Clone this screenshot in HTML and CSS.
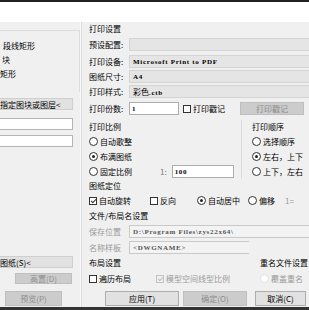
FILE: index.html
```html
<!DOCTYPE html>
<html lang="zh-CN">
<head>
  <meta charset="UTF-8">
  <title>打印设置</title>
  <link rel="stylesheet" href="styles.css">
</head>
<body>
  <div class="topbar"></div>
  <div class="band"></div>
  <div class="dialog">
    <div class="left">
      <div class="lgroup">
        <div class="litem cut1">段线矩形</div>
        <div class="litem cut2">块</div>
        <div class="litem cut3">矩形</div>
      </div>
      <div class="pickbtn">指定图块或图层&lt;</div>
      <div class="linput"></div>
      <div class="linput"></div>
      <div class="lspacer"></div>
      <div class="pickbtn paper">图纸(S)&lt;</div>
      <div class="lbtnrow"><div class="btn disabled wide">高置(D)</div></div>
      <div class="lbtnrow prow"><div class="btn disabled preview">预览(P)</div></div>
    </div>
    <div class="right">
      <div class="head top">打印设置</div>
      <div class="frow r1"><span class="lab">预设配置:</span><div class="combo"></div></div>
      <div class="frow r2"><span class="lab">打印设备:</span><div class="combo mono">Microsoft Print to PDF</div></div>
      <div class="frow"><span class="lab">图纸尺寸:</span><div class="combo mono">A4</div></div>
      <div class="frow"><span class="lab">打印样式:</span><div class="combo">彩色<span class="mono">.ctb</span></div></div>
      <div class="frow r5">
        <span class="lab">打印份数:</span>
        <div class="input small mono">1</div>
        <span class="check"><i class="box"></i>打印戳记</span>
        <div class="btn disabled stamp">打印戳记</div>
      </div>
      <div class="split first">
        <div class="scale">
          <div class="head sub">打印比例</div>
          <div class="opt"><i class="radio"></i>自动歌整</div>
          <div class="opt"><i class="radio on"></i>布满图纸</div>
          <div class="opt"><i class="radio"></i>固定比例<span class="ratio">1:</span><div class="input ratioin mono">100</div></div>
        </div>
        <div class="order">
          <div class="head sub">打印顺序</div>
          <div class="opt"><i class="radio"></i>选择顺序</div>
          <div class="opt"><i class="radio on"></i>左右，上下</div>
          <div class="opt"><i class="radio"></i>上下，左右</div>
        </div>
      </div>
      <div class="head sub">图纸定位</div>
      <div class="opt posrow">
        <span class="check"><i class="box on"></i>自动旋转</span>
        <span class="check rev"><i class="box"></i>反向</span>
        <span class="check center"><i class="radio on"></i>自动居中</span>
        <span class="check shift"><i class="radio"></i>偏移</span>
        <span class="gray offs">1=</span>
      </div>
      <div class="head sub gap">文件/布局名设置</div>
      <div class="frow gap"><span class="lab gray">保存位置</span><div class="combo flat mono">D:\Program Files\zys22x64\</div></div>
      <div class="frow gap"><span class="lab gray">名称样板</span><div class="combo flat short mono">&lt;DWGNAME&gt;</div></div>
      <div class="split last">
        <div class="scale">
          <div class="head sub">布局设置</div>
          <div class="opt">
            <span class="check"><i class="box"></i>遍历布局</span>
            <span class="check gray model"><i class="box on dim"></i>模型空间线型比例</span>
          </div>
        </div>
        <div class="order">
          <div class="head sub">重名文件设置</div>
          <div class="opt gray"><i class="radio dim"></i>覆盖重名</div>
        </div>
      </div>
      <div class="btnrow">
        <div class="btn apply">应用(T)</div>
        <div class="btn disabled ok">确定(O)</div>
        <div class="btn cancel">取消(C)</div>
      </div>
    </div>
  </div>
  <div class="bottombar"></div>
</body>
</html>
```

FILE: styles.css
```css
html, body {
  margin: 0;
  padding: 0;
}
body {
  width: 309px;
  height: 310px;
  overflow: hidden;
  background: #f0f0f0;
  font-family: "Noto Sans CJK SC", sans-serif;
  font-size: 8px;
  color: #000;
}
.topbar {
  height: 2px;
  background: #222;
}
.band {
  height: 20px;
  background: #fff;
}
.bottombar {
  height: 3px;
  background: #333;
}
.dialog {
  display: flex;
  height: 285px;
}
.mono {
  font-family: "Liberation Serif", serif;
  font-weight: bold;
  font-size: 7px;
  letter-spacing: 0.7px;
}
.gray {
  color: #9a9a9a;
}

/* left column */
.left {
  flex: none;
  width: 80px;
  display: flex;
  flex-direction: column;
  border-right: 1px solid #fafafa;
}
.lgroup {
  margin-top: 8px;
  height: 62px;
  border-top: 1px solid #dcdcdc;
  border-right: 1px solid #dcdcdc;
  padding-top: 8px;
  box-sizing: border-box;
}
.litem {
  height: 14px;
  line-height: 14px;
  white-space: nowrap;
}
.cut1 { padding-left: 3px; }
.cut2 { padding-left: 2px; }
.cut3 { padding-left: 0; }
.pickbtn {
  margin-top: 6px;
  width: 73px;
  height: 12px;
  line-height: 11px;
  background: #e1e1e1;
  border: 1px solid #cfcfcf;
  border-left: none;
  box-sizing: border-box;
  white-space: nowrap;
}
.pickbtn.paper {
  margin-top: 0;
}
.linput {
  margin-top: 8px;
  width: 73px;
  height: 12px;
  background: #fff;
  border: 1px solid #b5b5b5;
  border-left: none;
  box-sizing: border-box;
}
.linput + .linput {
  margin-top: 5px;
}
.lspacer {
  flex: 1;
}
.lbtnrow {
  display: flex;
  margin-top: 5px;
}
.lbtnrow.prow {
  margin-top: 7px;
}
.btn {
  height: 15px;
  line-height: 13px;
  text-align: center;
  background: #e1e1e1;
  border: 1px solid #adadad;
  box-sizing: border-box;
  white-space: nowrap;
}
.btn.disabled {
  background: #cccccc;
  border-color: #bfbfbf;
  color: #8c8c8c;
}
.wide {
  margin-left: 15px;
  width: 57px;
  height: 11px;
  line-height: 9px;
}
.preview {
  margin-left: 5px;
  width: 57px;
  margin-bottom: 1px;
}

/* right column */
.right {
  flex: 1;
  min-width: 0;
  padding-left: 7px;
  display: flex;
  flex-direction: column;
  border-left: 1px solid #dcdcdc;
}
.head {
  height: 14px;
  line-height: 14px;
  white-space: nowrap;
}
.head.top {
  height: 13px;
  line-height: 13px;
}
.frow {
  display: flex;
  align-items: center;
  height: 15px;
  white-space: nowrap;
}
.r1, .r2, .r5 {
  margin-top: 2px;
}
.gap {
  margin-top: 1px;
}
.lab {
  width: 40px;
  flex: none;
}
.combo {
  flex: 1;
  height: 13px;
  line-height: 12px;
  background: #e5e5e5;
  border: 1px solid #d4d4d4;
  border-right: none;
  box-sizing: border-box;
  padding-left: 3px;
  overflow: hidden;
}
.combo.flat {
  background: #f3f3f3;
  border-color: #c9c9c9;
  color: #555;
}
.combo.short {
  flex: none;
  width: 120px;
}
.input {
  flex: none;
  height: 13px;
  line-height: 12px;
  background: #fff;
  border: 1px solid #adadad;
  box-sizing: border-box;
  padding-left: 2px;
}
.small {
  width: 50px;
}
.check {
  display: inline-flex;
  align-items: center;
}
.frow .check {
  margin-left: 4px;
}
.box {
  flex: none;
  width: 8px;
  height: 8px;
  border: 1px solid #333;
  box-sizing: border-box;
  margin-right: 2px;
  background: #fff;
  position: relative;
}
.box.on::after {
  content: "";
  position: absolute;
  left: 2px;
  top: 0;
  width: 2px;
  height: 4px;
  border: solid #333;
  border-width: 0 1px 1px 0;
  transform: rotate(45deg);
}
.box.dim {
  border-color: #c4c4c4;
  background: transparent;
}
.box.dim::after {
  border-color: #bdbdbd;
}
.radio {
  flex: none;
  width: 9px;
  height: 9px;
  border: 1px solid #333;
  border-radius: 50%;
  box-sizing: border-box;
  margin-right: 2px;
  background: #fff;
  display: inline-block;
  position: relative;
}
.radio.on::after {
  content: "";
  position: absolute;
  left: 2px;
  top: 2px;
  width: 3px;
  height: 3px;
  border-radius: 50%;
  background: #222;
}
.radio.dim {
  border-color: #e0e0e0;
}
.stamp {
  flex: none;
  margin-left: auto;
  margin-right: 5px;
  width: 64px;
  height: 13px;
  line-height: 11px;
}
.split {
  display: flex;
}
.split.first {
  margin-top: 4px;
}
.split.last {
  margin-top: 1px;
}
.split.last .opt {
  margin-top: 1px;
}
.scale {
  flex: none;
  width: 152px;
  border-right: 1px solid #dcdcdc;
}
.order {
  flex: 1;
  padding-left: 10px;
}
.last .scale {
  border-right: none;
}
.last .order {
  padding-left: 19px;
}
.opt {
  display: flex;
  align-items: center;
  height: 15px;
  white-space: nowrap;
}
.ratio {
  margin-left: 28px;
  margin-right: 5px;
  color: #777;
}
.ratioin {
  width: 62px;
}
.rev {
  margin-left: 19px;
}
.center {
  margin-left: 21px;
}
.shift {
  margin-left: 8px;
}
.offs {
  margin-left: 10px;
}
.model {
  margin-left: 25px;
}
.btnrow {
  display: flex;
  margin-top: 5px;
  margin-left: 16px;
}
.apply {
  width: 74px;
}
.ok {
  width: 64px;
  margin-left: 4px;
}
.cancel {
  width: 51px;
  margin-left: 8px;
}
```
